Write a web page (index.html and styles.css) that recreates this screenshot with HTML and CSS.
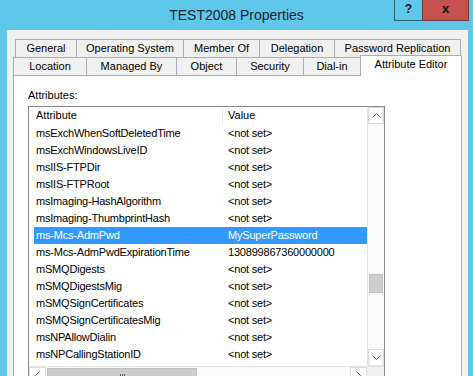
FILE: index.html
```html
<!DOCTYPE html>
<html lang="en">
<head>
  <meta charset="UTF-8">
  <meta name="viewport" content="width=device-width, initial-scale=1.0">
  <title>TEST2008 Properties</title>
  <link rel="stylesheet" href="styles.css">
</head>
<body>
  <div class="window">
    <div class="titlebar">
      <span></span>
      <div class="title">TEST2008 Properties</div>
      <div class="caption-buttons">
        <span class="btn-help">?</span>
        <span class="btn-close">x</span>
      </div>
    </div>

    <div class="dialog">
      <div class="tab-row back">
        <div class="tab t-general">General</div>
        <div class="tab t-os">Operating System</div>
        <div class="tab t-member">Member Of</div>
        <div class="tab t-deleg">Delegation</div>
        <div class="tab t-pwrep">Password Replication</div>
      </div>
      <div class="tab-row front">
        <div class="tab t-location">Location</div>
        <div class="tab t-managed">Managed By</div>
        <div class="tab t-object">Object</div>
        <div class="tab t-security">Security</div>
        <div class="tab t-dialin">Dial-in</div>
        <div class="tab t-attr selected">Attribute Editor</div>
      </div>

      <div class="panel">
        <div class="label">Attributes:</div>
        <div class="listbox">
          <div class="list-main">
            <div class="list-view">
              <div class="list-header">
                <div class="hcell hcell-name">Attribute</div>
                <div class="hcell hcell-value">Value</div>
              </div>
              <div class="row"><span class="c-name">msExchWhenSoftDeletedTime</span><span class="c-value">&lt;not set&gt;</span></div>
              <div class="row"><span class="c-name">msExchWindowsLiveID</span><span class="c-value">&lt;not set&gt;</span></div>
              <div class="row"><span class="c-name">msIIS-FTPDir</span><span class="c-value">&lt;not set&gt;</span></div>
              <div class="row"><span class="c-name">msIIS-FTPRoot</span><span class="c-value">&lt;not set&gt;</span></div>
              <div class="row"><span class="c-name">msImaging-HashAlgorithm</span><span class="c-value">&lt;not set&gt;</span></div>
              <div class="row"><span class="c-name">msImaging-ThumbprintHash</span><span class="c-value">&lt;not set&gt;</span></div>
              <div class="row active"><span class="c-name">ms-Mcs-AdmPwd</span><span class="c-value">MySuperPassword</span></div>
              <div class="row"><span class="c-name">ms-Mcs-AdmPwdExpirationTime</span><span class="c-value">130899867360000000</span></div>
              <div class="row"><span class="c-name">mSMQDigests</span><span class="c-value">&lt;not set&gt;</span></div>
              <div class="row"><span class="c-name">mSMQDigestsMig</span><span class="c-value">&lt;not set&gt;</span></div>
              <div class="row"><span class="c-name">mSMQSignCertificates</span><span class="c-value">&lt;not set&gt;</span></div>
              <div class="row"><span class="c-name">mSMQSignCertificatesMig</span><span class="c-value">&lt;not set&gt;</span></div>
              <div class="row"><span class="c-name">msNPAllowDialin</span><span class="c-value">&lt;not set&gt;</span></div>
              <div class="row"><span class="c-name">msNPCallingStationID</span><span class="c-value">&lt;not set&gt;</span></div>
            </div>
            <div class="vscroll">
              <div class="sb-btn">
                <svg width="9" height="5" viewBox="0 0 9 5"><polyline points="0.5,4.5 4.5,0.5 8.5,4.5" fill="none" stroke="#606060" stroke-width="1"/></svg>
              </div>
              <div class="v-track-top"></div>
              <div class="v-thumb"></div>
              <div class="v-track-bottom"></div>
              <div class="sb-btn">
                <svg width="9" height="5" viewBox="0 0 9 5"><polyline points="0.5,0.5 4.5,4.5 8.5,0.5" fill="none" stroke="#606060" stroke-width="1"/></svg>
              </div>
            </div>
          </div>
          <div class="hscroll">
            <div class="sb-btn">
              <svg width="5" height="9" viewBox="0 0 5 9"><polyline points="4.5,0.5 0.5,4.5 4.5,8.5" fill="none" stroke="#606060" stroke-width="1"/></svg>
            </div>
            <div class="h-thumb"><span class="grip"></span></div>
            <div class="h-track"></div>
            <div class="sb-btn">
              <svg width="5" height="9" viewBox="0 0 5 9"><polyline points="0.5,0.5 4.5,4.5 0.5,8.5" fill="none" stroke="#606060" stroke-width="1"/></svg>
            </div>
            <div class="corner"></div>
          </div>
        </div>
      </div>
    </div>
  </div>
</body>
</html>
```

FILE: styles.css
```css
/* Windows dialog look */
body {
  margin: 0;
  padding: 0;
  background-color: #5fc7ea;
  font-family: "Liberation Sans", Arial, sans-serif;
  font-size: 11px;
  color: #000;
  overflow: hidden;
}

.window {
  height: 376px;
  display: flex;
  flex-direction: column;
}

.titlebar {
  height: 30px;
  display: grid;
  grid-template-columns: 1fr auto 1fr;
  flex-shrink: 0;
}

.title {
  font-size: 14px;
  line-height: 30px;
  color: #17222b;
}

.caption-buttons {
  justify-self: end;
  display: flex;
  margin-right: 4px;
  height: 21px;
}

.btn-help {
  width: 27px;
  border: 1px solid #2c6276;
  border-top: none;
  border-right: none;
  text-align: center;
  font-weight: bold;
  font-size: 12px;
  line-height: 19px;
  color: #111;
}

.btn-close {
  width: 45px;
  background-color: #c75050;
  border: 1px solid #6e3a3a;
  border-top: none;
  text-align: center;
  font-weight: bold;
  font-size: 13px;
  line-height: 17px;
  color: #111;
}

.dialog {
  flex: 1;
  margin: 0 5px 0 7px;
  padding: 9px 6px 0 6px;
  background-color: #f0f0f0;
  display: flex;
  flex-direction: column;
}

.tab-row {
  display: flex;
  height: 18px;
  align-items: flex-end;
}

.tab-row.back {
  padding-left: 2px;
}

.tab {
  box-sizing: border-box;
  height: 18px;
  border-left: 1px solid #adadad;
  border-top: 1px solid #adadad;
  background-color: #f0f0f0;
  text-align: center;
  line-height: 17px;
  white-space: nowrap;
}

.tab:last-child {
  border-right: 1px solid #adadad;
}

.tab.selected {
  position: relative;
  z-index: 2;
  height: 21px;
  margin-bottom: -1px;
  background-color: #fff;
  line-height: 16px;
}

.t-general { width: 61px; }
.t-os { width: 107px; }
.t-member { width: 76px; }
.t-deleg { width: 75px; }
.t-pwrep { width: 127px; }
.t-location { width: 73px; }
.t-managed { width: 90px; }
.t-object { width: 60px; }
.t-security { width: 67px; }
.t-dialin { width: 57px; }
.t-attr { width: 102px; }

.panel {
  flex: 1;
  position: relative;
  z-index: 1;
  background-color: #fff;
  border: 1px solid #adadad;
  border-bottom: none;
  padding: 13px 0 0 14px;
}

.label {
  line-height: 13px;
  margin-bottom: 4px;
}

.listbox {
  width: 357px;
  box-sizing: border-box;
  border: 1px solid #828790;
  border-bottom: none;
}

.list-main {
  display: flex;
}

.list-view {
  width: 338px;
  height: 259px;
}

.list-header {
  display: flex;
  height: 18px;
  line-height: 17px;
}

.hcell {
  box-sizing: border-box;
}

.hcell-name {
  width: 194px;
  padding-left: 7px;
  border-right: 1px solid #e5e5e5;
}

.hcell-value {
  padding-left: 5px;
}

.row {
  display: flex;
  height: 17px;
  line-height: 17px;
  margin-left: 5px;
  letter-spacing: -0.2px;
  white-space: nowrap;
}

.c-name {
  width: 189px;
  padding-left: 2px;
  box-sizing: border-box;
}

.c-value {
  padding-left: 5px;
}

.row.active {
  background-color: #3399ff;
  color: #fff;
}

.vscroll {
  width: 17px;
  height: 259px;
  display: flex;
  flex-direction: column;
  border-left: 1px solid #e3e3e3;
  box-sizing: border-box;
  background-color: #fafafa;
}

.sb-btn {
  width: 16px;
  height: 17px;
  display: flex;
  align-items: center;
  justify-content: center;
  flex-shrink: 0;
  box-sizing: border-box;
  border: 1px solid #dcdcdc;
  background-color: #fff;
}

.v-track-top {
  height: 150px;
}

.v-thumb {
  height: 17px;
  margin: 0 1px;
  background-color: #cdcdcd;
  border: 1px solid #c2c2c2;
}

.v-track-bottom {
  flex: 1;
}

.hscroll {
  display: flex;
  height: 17px;
  border-top: 1px solid #e3e3e3;
  background-color: #fafafa;
}

.hscroll .sb-btn {
  width: 17px;
}

.h-thumb {
  width: 148px;
  margin: 1px 0 0 1px;
  background-color: #cdcdcd;
  border: 1px solid #c2c2c2;
  display: flex;
  justify-content: center;
  padding-top: 5px;
}

.grip {
  width: 5px;
  height: 6px;
  border-left: 1px solid #606060;
  border-right: 1px solid #606060;
  position: relative;
  box-sizing: border-box;
  background: linear-gradient(to right, transparent 1px, #606060 1px, #606060 2px, transparent 2px);
}

.h-track {
  flex: 1;
}

.corner {
  width: 17px;
  background-color: #f0f0f0;
}
```
